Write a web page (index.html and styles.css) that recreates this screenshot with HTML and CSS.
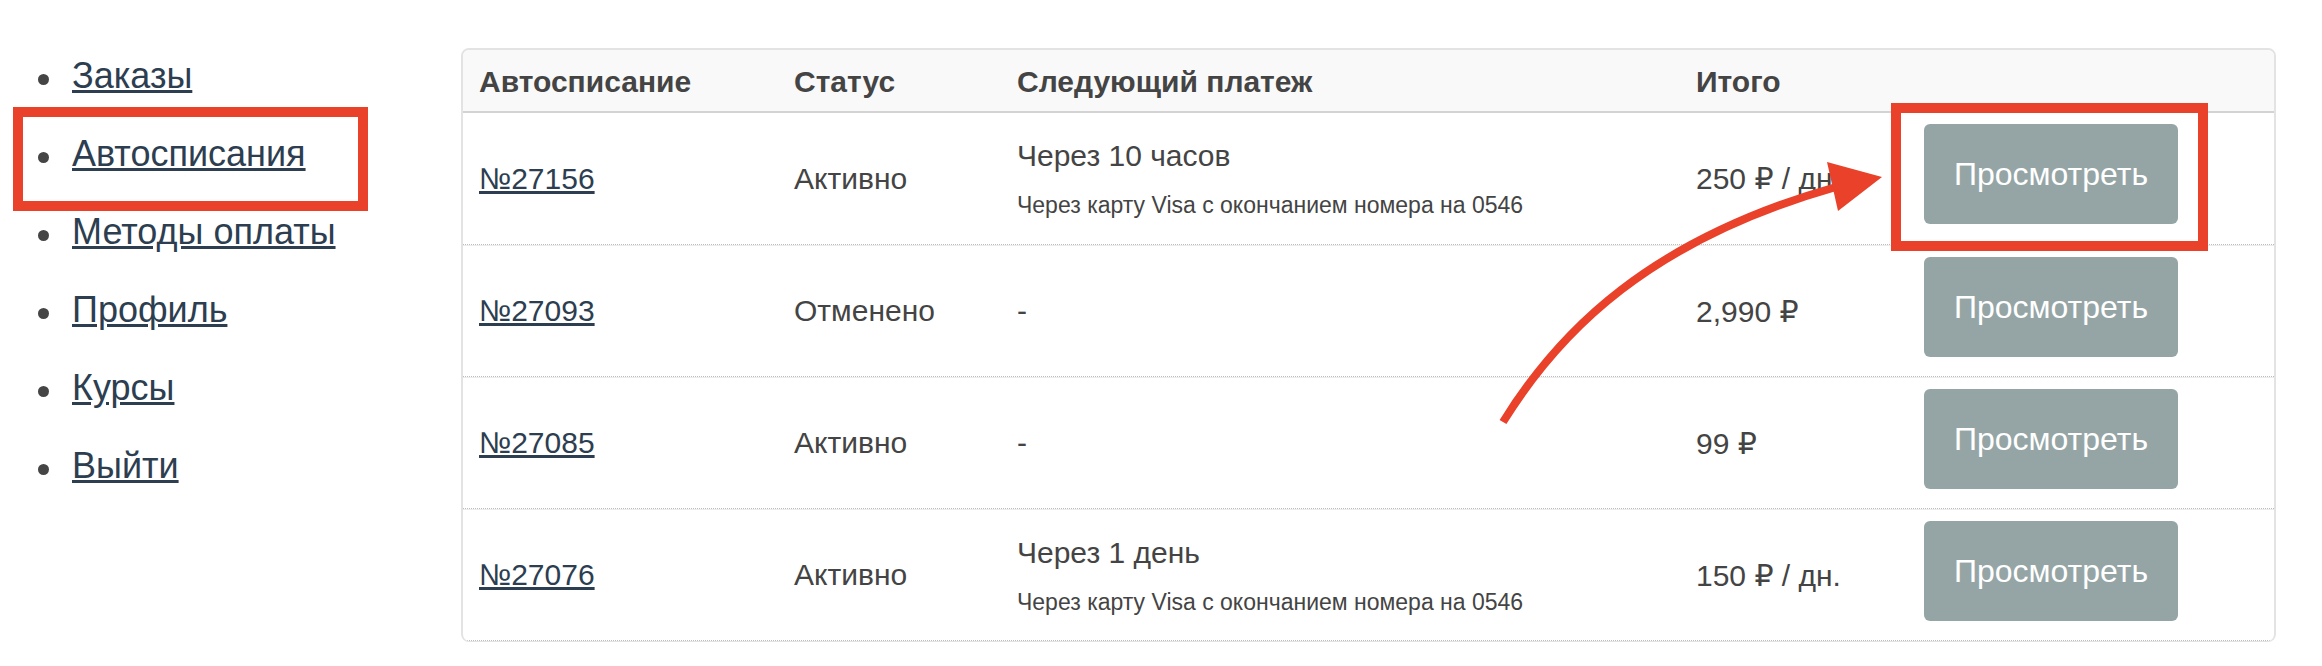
FILE: index.html
```html
<!DOCTYPE html>
<html lang="ru">
<head>
<meta charset="utf-8">
<title>Автосписания</title>
<link rel="stylesheet" href="styles.css">
</head>
<body>
<div class="page">
  <nav class="sidebar">
    <ul class="menu">
      <li><a href="#">Заказы</a></li>
      <li><a href="#">Автосписания</a></li>
      <li><a href="#">Методы оплаты</a></li>
      <li><a href="#">Профиль</a></li>
      <li><a href="#">Курсы</a></li>
      <li><a href="#">Выйти</a></li>
    </ul>
  </nav>
  <main class="content">
    <div class="subs">
      <div class="row head">
        <div class="cell">Автосписание</div>
        <div class="cell">Статус</div>
        <div class="cell">Следующий платеж</div>
        <div class="cell">Итого</div>
        <div class="cell"></div>
      </div>
      <div class="row item">
        <div class="cell"><a href="#">№27156</a></div>
        <div class="cell">Активно</div>
        <div class="cell stack"><div class="next">Через 10 часов</div><div class="card">Через карту Visa с окончанием номера на 0546</div></div>
        <div class="cell">250 ₽ / дн.</div>
        <div class="cell action"><button class="btn">Просмотреть</button></div>
      </div>
      <div class="row item">
        <div class="cell"><a href="#">№27093</a></div>
        <div class="cell">Отменено</div>
        <div class="cell">-</div>
        <div class="cell">2,990 ₽</div>
        <div class="cell action"><button class="btn">Просмотреть</button></div>
      </div>
      <div class="row item">
        <div class="cell"><a href="#">№27085</a></div>
        <div class="cell">Активно</div>
        <div class="cell">-</div>
        <div class="cell">99 ₽</div>
        <div class="cell action"><button class="btn">Просмотреть</button></div>
      </div>
      <div class="row item">
        <div class="cell"><a href="#">№27076</a></div>
        <div class="cell">Активно</div>
        <div class="cell stack"><div class="next">Через 1 день</div><div class="card">Через карту Visa с окончанием номера на 0546</div></div>
        <div class="cell">150 ₽ / дн.</div>
        <div class="cell action"><button class="btn">Просмотреть</button></div>
      </div>
    </div>
  </main>
</div>
<svg class="annot" width="2322" height="666" viewBox="0 0 2322 666" xmlns="http://www.w3.org/2000/svg">
  <rect x="18" y="112" width="345" height="94" fill="none" stroke="#e9412a" stroke-width="10"/>
  <rect x="1896" y="108" width="307" height="138" fill="none" stroke="#e9412a" stroke-width="10"/>
  <path d="M1503,422 C1560,330 1650,240 1836,187" fill="none" stroke="#e9412a" stroke-width="8"/>
  <polygon points="1827,162 1882,177 1838,211" fill="#e9412a"/>
</svg>
</body>
</html>
```

FILE: styles.css
```css
html, body {
  margin: 0;
  padding: 0;
  background: #ffffff;
}

body {
  position: relative;
  font-family: "Liberation Sans", Arial, "DejaVu Sans", sans-serif;
  color: #444444;
  width: 2322px;
  height: 666px;
  overflow: hidden;
}

.page {
  display: flex;
  align-items: flex-start;
}

.sidebar {
  width: 461px;
  flex: none;
}

.menu {
  list-style: none;
  margin: 0;
  padding: 37px 0 0 38px;
}

.menu li {
  display: flex;
  align-items: center;
  height: 78px;
  font-size: 36px;
}

.menu li::before {
  content: "";
  flex: none;
  width: 11px;
  height: 11px;
  margin-top: 6px;
  margin-right: 23px;
  border-radius: 50%;
  background: #454545;
}

.menu a {
  color: #2c3e50;
  text-decoration: underline;
}

.content {
  padding-top: 48px;
}

.subs {
  width: 1815px;
  box-sizing: border-box;
  border: 2px solid #e3e3e3;
  border-bottom-width: 1px;
  border-radius: 8px;
  overflow: hidden;
}

.row {
  display: grid;
  grid-template-columns: 315px 223px 679px 228px 1fr;
  box-sizing: border-box;
}

.cell {
  padding: 0 16px;
  display: flex;
  align-items: center;
  font-size: 30px;
  white-space: nowrap;
}

.head {
  height: 63px;
  padding-top: 2px;
  background: #f9f9f9;
  border-bottom: 2px solid #d3d3d3;
  font-weight: bold;
}

.item {
  height: 132px;
  border-bottom: 1px dotted #bdbdbd;
}

.item + .item {
  border-top: 1px solid #ececec;
}

.item .cell a {
  color: #2c3e50;
  text-decoration: underline;
}

.stack {
  flex-direction: column;
  align-items: flex-start;
  justify-content: center;
}

.next {
  font-size: 30px;
  line-height: 42px;
}

.card {
  font-size: 23px;
  line-height: 34px;
  margin-top: 11px;
}

.action {
  align-items: flex-start;
  padding-top: 11px;
}

.btn {
  width: 254px;
  height: 100px;
  border: 0;
  border-radius: 6px;
  background: #95a5a6;
  color: #ffffff;
  font-family: "Liberation Sans", Arial, sans-serif;
  font-size: 32px;
  padding: 0;
}

.annot {
  position: absolute;
  top: 0;
  left: 0;
  pointer-events: none;
}
```
